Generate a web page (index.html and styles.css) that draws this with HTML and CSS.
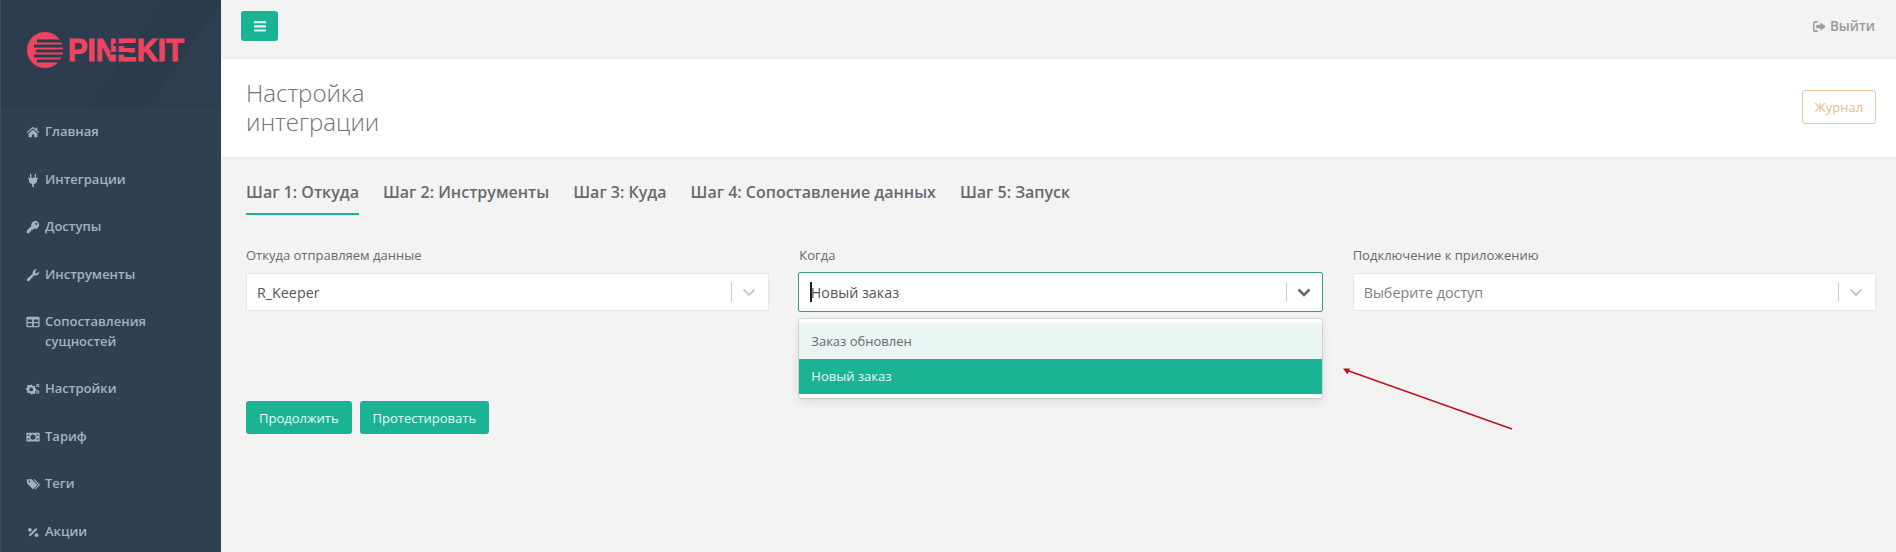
FILE: index.html
```html
<!DOCTYPE html>
<html lang="ru">
<head>
<meta charset="utf-8">
<title>Настройка интеграции</title>
<link rel="stylesheet" href="styles.css">
</head>
<body>
<div class="app">
  <aside class="sidebar">
    <div class="brand">
      <svg class="logo" width="170" height="44" viewBox="0 0 170 44">
        <defs><clipPath id="disc"><circle cx="18" cy="22" r="18"/></clipPath></defs>
        <circle cx="18" cy="22" r="18" fill="#f0435f"/>
        <g clip-path="url(#disc)" fill="#2a3b4c">
          <rect x="10" y="11.500" width="30" height="3"/>
          <rect x="7" y="16.500" width="33" height="3"/>
          <rect x="9" y="21.500" width="31" height="3"/>
          <rect x="7" y="26.500" width="33" height="3"/>
          <rect x="10" y="31.500" width="30" height="3"/>
        </g>
        <text class="logo-text" x="41" y="33" textLength="116" lengthAdjust="spacingAndGlyphs">PINEKIT</text>
        <g fill="#2a3b4c">
          <polygon points="87,15.500 105,15.500 104,18 86,18"/>
          <polygon points="84,24 102,24 101,26.500 83,26.500"/>
        </g>
      </svg>
    </div>
    <nav class="menu">
      <a class="menu-item"><svg class="ico" viewBox="0 0 16 16"><path d="M8 2 .7 8.200l.9 1L8 3.900l6.400 5.300.9-1L13 6.300V3h-2v1.600zM3 9.600V14h3.600v-3.200h2.800V14H13V9.600L8 5.400z"/></svg><span>Главная</span></a>
      <a class="menu-item"><svg class="ico" viewBox="0 0 16 16"><path d="M4.500 1h1.600v4H4.500zM9.900 1h1.600v4H9.900zM2.500 5.500h11v1.500h-.8v1.500c0 2.300-1.500 3.700-3.700 4V16H7v-3.500c-2.200-.3-3.700-1.700-3.700-4V7h-.8z"/></svg><span>Интеграции</span></a>
      <a class="menu-item"><svg class="ico" viewBox="0 0 16 16"><path fill-rule="evenodd" d="M10.500 1A4.500 4.500 0 0 0 6.200 6.800L1 12v3h3v-2h2v-2h2l1.300-1.200A4.500 4.500 0 1 0 10.500 1zm1.300 2a1.300 1.300 0 1 1 0 2.600 1.300 1.300 0 0 1 0-2.600z"/></svg><span>Доступы</span></a>
      <a class="menu-item"><svg class="ico" viewBox="0 0 16 16"><path d="M15 4.200c.2 2.500-1.700 4.500-4.200 4.300-.5 0-.9-.1-1.300-.3L3.800 14.500c-.8.800-1.900.8-2.500.1-.7-.7-.6-1.700.1-2.400L7.700 6.500c-.6-2.500 1.200-5 3.900-5.200.4 0 .8 0 1.200.1L10.300 4l.4 1.800 1.700.4L15 3.600z"/></svg><span>Инструменты</span></a>
      <a class="menu-item"><svg class="ico" viewBox="0 0 16 16"><path fill-rule="evenodd" d="M2 2h12a1.500 1.500 0 0 1 1.500 1.500v9A1.500 1.500 0 0 1 14 14H2a1.500 1.500 0 0 1-1.500-1.500v-9A1.500 1.500 0 0 1 2 2zm0 3v3h5V5zm7 0v3h5V5zM2 9.500V12.500h5v-3zm7 0v3h5v-3z"/></svg><span>Сопоставления сущностей</span></a>
      <a class="menu-item"><svg class="ico" viewBox="0 0 16 16"><path fill-rule="evenodd" d="M5 3h2l.3 1.300 1.200.5 1.100-.7 1.300 1.300-.7 1.100.5 1.200 1.300.3v2l-1.300.3-.5 1.200.7 1.100-1.300 1.300-1.100-.7-1.200.5L7 14H5l-.3-1.300-1.200-.5-1.100.7L1.100 11.600l.7-1.100-.5-1.200L0 9V7l1.300-.3.5-1.200-.7-1.100 1.300-1.300 1.100.7 1.200-.5zm1 3.400a2.100 2.100 0 1 0 0 4.200 2.100 2.100 0 0 0 0-4.200z"/><path fill-rule="evenodd" d="M13.500 2a1.900 1.900 0 1 0 0 3.800 1.900 1.900 0 0 0 0-3.800zm0 1.100a.8.800 0 1 1 0 1.600.8.800 0 0 1 0-1.600zM13.500 9.500a1.900 1.900 0 1 0 0 3.800 1.900 1.900 0 0 0 0-3.800zm0 1.100a.8.800 0 1 1 0 1.600.8.800 0 0 1 0-1.600z"/></svg><span>Настройки</span></a>
      <a class="menu-item"><svg class="ico" viewBox="0 0 16 16"><path fill-rule="evenodd" d="M.5 3h15v10H.5zM8 5a3 3 0 1 0 0 6 3 3 0 0 0 0-6zM2 5v2a2 2 0 0 0 2-2zm10 0a2 2 0 0 0 2 2V5zM2 9v2h2a2 2 0 0 0-2-2zm12 0a2 2 0 0 0-2 2h2z"/></svg><span>Тариф</span></a>
      <a class="menu-item"><svg class="ico" viewBox="0 0 16 16"><path fill-rule="evenodd" d="M1 2.500h5.500L13 9l-5 5-7-7zM3.800 4a1 1 0 1 0 0 2 1 1 0 0 0 0-2z"/><path d="M8.500 2.500h1.500l6 6.500-5 5-1-1 4-4z"/></svg><span>Теги</span></a>
      <a class="menu-item"><svg class="ico" viewBox="0 0 16 16"><path d="M11.500 3.500 13 5l-8.500 8L3 11.500z"/><circle cx="4.500" cy="5.500" r="2.200"/><circle cx="12" cy="11.500" r="2.200"/></svg><span>Акции</span></a>
    </nav>
  </aside>

  <main class="content">
    <header class="topbar">
      <button class="toggle" type="button" aria-label="Меню">
        <svg width="12" height="11" viewBox="0 0 12 11"><path d="M0 0h12v2.200H0zM0 4.200h12v2.200H0zM0 8.400h12v2.200H0z"/></svg>
      </button>
      <a class="logout">
        <svg width="13" height="11" viewBox="0 0 14 12"><path d="M5 0v1.800H2.200c-.4 0-.6.2-.6.6v7.200c0 .4.2.6.6.6H5V12H2C.8 12 0 11.200 0 10V2C0 .8.800 0 2 0z"/><path d="M8 1.500 14 6l-6 4.500V8H3.500V4H8z"/></svg>
        Выйти
      </a>
    </header>

    <section class="page-head">
      <h2 class="page-title">Настройка<br>интеграции</h2>
      <button class="journal" type="button">Журнал</button>
    </section>

    <section class="body">
      <ul class="steps">
        <li class="step step-active">Шаг 1: Откуда</li>
        <li class="step">Шаг 2: Инструменты</li>
        <li class="step">Шаг 3: Куда</li>
        <li class="step">Шаг 4: Сопоставление данных</li>
        <li class="step">Шаг 5: Запуск</li>
      </ul>

      <div class="fields">
        <div class="field">
          <label class="field-label">Откуда отправляем данные</label>
          <div class="select">
            <span class="select-value">R_Keeper</span>
            <span class="select-sep"></span>
            <svg class="chev" width="14" height="9" viewBox="0 0 14 9"><path d="M1.500 1.500 7 7l5.500-5.500"/></svg>
          </div>
        </div>
        <div class="field">
          <label class="field-label">Когда</label>
          <div class="select select-open">
            <span class="select-value"><span class="caret"></span>Новый заказ</span>
            <span class="select-sep"></span>
            <svg class="chev" width="14" height="9" viewBox="0 0 14 9"><path d="M1.500 1.500 7 7l5.500-5.500"/></svg>
            <ul class="dropdown">
              <li class="option option-hover">Заказ обновлен</li>
              <li class="option option-selected">Новый заказ</li>
            </ul>
          </div>
        </div>
        <div class="field">
          <label class="field-label">Подключение к приложению</label>
          <div class="select">
            <span class="select-value placeholder">Выберите доступ</span>
            <span class="select-sep"></span>
            <svg class="chev" width="14" height="9" viewBox="0 0 14 9"><path d="M1.500 1.500 7 7l5.500-5.500"/></svg>
          </div>
        </div>
      </div>

      <div class="actions">
        <button class="btn" type="button">Продолжить</button>
        <button class="btn" type="button">Протестировать</button>
      </div>
    </section>
  </main>
</div>
<svg class="annotation" width="1896" height="552" viewBox="0 0 1896 552">
  <path d="M1512 429 1346 370" stroke="#b8141f" stroke-width="1.500" fill="none"/>
  <path d="M1343 368.500 1350 368.500 1347.500 374.500z" fill="#b8141f"/>
</svg>
</body>
</html>
```

FILE: styles.css
```css
* { box-sizing: border-box; }
html, body { margin: 0; height: 552px; overflow: hidden; }
body {
  position: relative;
  font-family: "Open Sans", "Liberation Sans", sans-serif;
  font-size: 13px;
  color: #676a6c;
  background: #f3f3f4;
}
.app { display: flex; height: 552px; }

/* Sidebar */
.sidebar {
  width: 221px;
  flex: none;
  background: #2f4050;
  border-left: 1px solid #3d4d5c;
}
.brand {
  height: 108px;
  padding: 28px 0 0 26px;
  background: linear-gradient(125deg, #2b3d4e 0 55%, #2a3b4c 55% 75%, #2c3e4f 75%);
}
.logo { display: block; }
.logo-text {
  font-family: "Liberation Sans", Arial, sans-serif;
  font-weight: 700;
  font-size: 31px;
  fill: #f0435f;
  stroke: #f0435f;
  stroke-width: 1px;
}
.menu { display: flex; flex-direction: column; }
.menu-item {
  display: flex;
  align-items: flex-start;
  gap: 5px;
  padding: 14px 20px 14px 25px;
  color: #a7b1c2;
  font-weight: 600;
  line-height: 19.500px;
}
.menu-item span { flex: 1; max-width: 125px; }
.ico {
  width: 14px;
  height: 14px;
  margin-top: 3px;
  flex: none;
  fill: #a7b1c2;
}

/* Top bar */
.content { flex: 1; min-width: 0; display: flex; flex-direction: column; }
.topbar {
  height: 59px;
  flex: none;
  display: flex;
  align-items: flex-start;
  justify-content: space-between;
  padding: 11px 21px 0 20px;
  border-bottom: 1px solid #e7eaec;
}
.toggle {
  width: 37px;
  height: 30px;
  display: flex;
  align-items: center;
  justify-content: center;
  padding: 0;
  background: #1ab394;
  border: 0;
  border-radius: 3px;
}
.toggle svg { fill: #d8f5ee; }
.logout {
  display: flex;
  align-items: center;
  gap: 4px;
  margin-top: 6px;
  color: #999c9e;
  font-size: 13.500px;
  font-weight: 600;
}
.logout svg { fill: #999c9e; }

/* Page heading */
.page-head {
  height: 99px;
  flex: none;
  display: flex;
  align-items: center;
  justify-content: space-between;
  padding: 0 20px 0 25px;
  background: #fff;
  border-bottom: 1px solid #e7eaec;
}
.page-title {
  margin: 0 0 3px;
  color: #707274;
  font-size: 24px;
  font-weight: 300;
  line-height: 29px;
}
.journal {
  width: 74px;
  height: 34px;
  padding: 0;
  margin-bottom: 3px;
  background: #fff;
  color: #e6b98c;
  font: 400 13px "Open Sans", sans-serif;
  border: 1px solid #e6c79f;
  border-radius: 3px;
}

/* Body */
.body { padding: 22px 20px 0 25px; }
.steps {
  display: flex;
  gap: 24px;
  margin: 0;
  padding: 0;
  list-style: none;
}
.step {
  padding: 0 0 9px;
  color: #676a6c;
  font-size: 16px;
  font-weight: 600;
  line-height: 24px;
}
.step-active { border-bottom: 2px solid #1ab394; }
.fields {
  display: grid;
  grid-template-columns: repeat(3, 1fr);
  gap: 30px;
  margin-top: 31px;
}
.field-label {
  display: block;
  margin-bottom: 9px;
  font-size: 13px;
  line-height: 18px;
  color: #676a6c;
}
.select {
  position: relative;
  height: 38px;
  display: flex;
  align-items: center;
  padding: 0 12px 0 10px;
  background: #fff;
  border: 1px solid #e5e6e7;
  border-radius: 1px;
  font-size: 14.300px;
  color: #555;
}
.select-open {
  height: 40px;
  margin: -1px 0 -1px -1px;
  padding: 0 11px 0 11px;
  border-color: #3a9d89;
  border-radius: 2px;
}
.select-value { flex: 1; display: flex; align-items: center; }
.placeholder { color: #808080; }
.caret {
  width: 1.500px;
  height: 20px;
  margin-right: -1px;
  background: #222;
}
.select-sep {
  width: 1px;
  height: 20px;
  margin-right: 10px;
  background: #ccc;
}
.chev { fill: none; stroke: #ccc; stroke-width: 2; }
.select-open .chev { stroke: #666; stroke-width: 2.500; }
.dropdown {
  position: absolute;
  top: 46px;
  left: 0;
  right: 0;
  margin: 0;
  padding: 4px 0;
  list-style: none;
  background: #fff;
  border-radius: 3px;
  box-shadow: 0 0 0 1px rgba(0, 0, 0, .1), 0 4px 11px rgba(0, 0, 0, .1);
}
.option {
  height: 35.500px;
  padding: 0 12px;
  display: flex;
  align-items: center;
  font-size: 13px;
}
.option-hover { background: #e8f5f2; color: #676a6c; }
.option-selected { background: #1ab394; color: #e4fbf6; }

/* Actions */
.actions {
  display: flex;
  gap: 8px;
  margin-top: 90px;
}
.btn {
  height: 33px;
  padding: 0 13px;
  background: #1ab394;
  color: #e4fbf6;
  font: 400 13px "Open Sans", sans-serif;
  border: 0;
  border-radius: 3px;
}

/* Screenshot annotation drawn over the page */
.annotation {
  position: absolute;
  left: 0;
  top: 0;
  pointer-events: none;
}
```
